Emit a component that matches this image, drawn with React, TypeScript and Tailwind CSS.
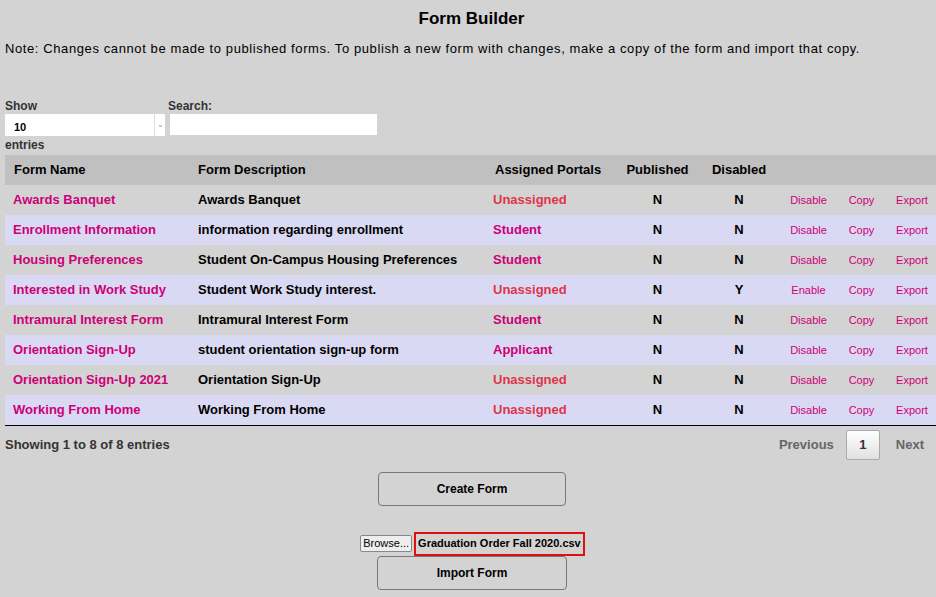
import React from 'react';

type Row = {
    name: string;
    desc: string;
    portal: string;
    published: string;
    disabled: string;
    toggle: string;
};

const rows: Row[] = [
    { name: 'Awards Banquet', desc: 'Awards Banquet', portal: 'Unassigned', published: 'N', disabled: 'N', toggle: 'Disable' },
    { name: 'Enrollment Information', desc: 'information regarding enrollment', portal: 'Student', published: 'N', disabled: 'N', toggle: 'Disable' },
    { name: 'Housing Preferences', desc: 'Student On-Campus Housing Preferences', portal: 'Student', published: 'N', disabled: 'N', toggle: 'Disable' },
    { name: 'Interested in Work Study', desc: 'Student Work Study interest.', portal: 'Unassigned', published: 'N', disabled: 'Y', toggle: 'Enable' },
    { name: 'Intramural Interest Form', desc: 'Intramural Interest Form', portal: 'Student', published: 'N', disabled: 'N', toggle: 'Disable' },
    { name: 'Orientation Sign-Up', desc: 'student orientation sign-up form', portal: 'Applicant', published: 'N', disabled: 'N', toggle: 'Disable' },
    { name: 'Orientation Sign-Up 2021', desc: 'Orientation Sign-Up', portal: 'Unassigned', published: 'N', disabled: 'N', toggle: 'Disable' },
    { name: 'Working From Home', desc: 'Working From Home', portal: 'Unassigned', published: 'N', disabled: 'N', toggle: 'Disable' },
];

export default function App() {
    return (
        <div className="min-h-[597px] w-[936px] bg-[#d3d3d3] font-['Liberation_Sans',Arial,sans-serif] text-black overflow-hidden">
            {/* Title */}
            <h1 className="pl-[7px] pt-[8px] text-center text-[17px] font-bold leading-[22px]">Form Builder</h1>
            <p className="pl-[5px] pt-[11px] text-[13px] leading-[16px] tracking-[0.6px]">
                Note: Changes cannot be made to published forms. To publish a new form with changes, make a copy of the form and import that copy.
            </p>

            {/* Controls */}
            <div className="mt-[42px] flex pl-[5px] text-[12px] font-bold text-[#333]">
                <div className="flex flex-col">
                    <span className="leading-[14px]">Show</span>
                    <div className="mt-[1px] flex h-[22px] w-[160px] bg-white">
                        <span className="flex-1 pl-[9px] pt-[5px] text-[11px] text-black">10</span>
                        <span className="flex w-[11px] items-center justify-center border-l border-[#ddd] text-[8px] font-normal text-[#999]">⌄</span>
                    </div>
                </div>
                <div className="ml-[3px] flex flex-col">
                    <span className="leading-[14px]">Search:</span>
                    <div className="ml-[2px] mt-[1px] h-[21px] w-[207px] bg-white" />
                </div>
            </div>
            <div className="pl-[5px] text-[12px] font-bold leading-[19px] text-[#333]">entries</div>

            {/* Table */}
            <table className="ml-[5px] w-[931px] table-fixed border-collapse text-[13px] font-bold">
                <colgroup>
                    <col className="w-[184px]" />
                    <col className="w-[297px]" />
                    <col className="w-[133px]" />
                    <col className="w-[77px]" />
                    <col className="w-[86px]" />
                    <col className="w-[53px]" />
                    <col className="w-[53px]" />
                    <col className="w-[48px]" />
                </colgroup>
                <thead>
                    <tr className="h-[30px] bg-[#c0c0c0]">
                        <th className="pl-[9px] text-left">Form Name</th>
                        <th className="pl-[9px] text-left">Form Description</th>
                        <th className="pl-[9px] text-left">Assigned Portals</th>
                        <th className="text-center">Published</th>
                        <th className="text-center">Disabled</th>
                        <th />
                        <th />
                        <th />
                    </tr>
                </thead>
                <tbody className="border-b border-black">
                    {rows.map((r, i) => (
                        <tr key={r.name} className={i % 2 === 0 ? 'h-[30px] bg-[#d3d3d3]' : 'h-[30px] bg-[#dad9f3]'}>
                            <td className="pl-[8px] text-[#cc0077]">{r.name}</td>
                            <td className="pl-[9px]">{r.desc}</td>
                            <td className={r.portal === 'Unassigned' ? 'pl-[7px] text-[#e0344c]' : 'pl-[7px] text-[#cc0077]'}>{r.portal}</td>
                            <td className="text-center">{r.published}</td>
                            <td className="text-center">{r.disabled}</td>
                            <td className="text-center text-[11px] font-normal text-[#cc0077]">{r.toggle}</td>
                            <td className="text-center text-[11px] font-normal text-[#cc0077]">Copy</td>
                            <td className="text-center text-[11px] font-normal text-[#cc0077]">Export</td>
                        </tr>
                    ))}
                </tbody>
            </table>

            {/* Footer of table */}
            <div className="flex items-center justify-between pl-[5px] pt-[4px] text-[13px] font-bold text-[#333]">
                <span>Showing 1 to 8 of 8 entries</span>
                <div className="flex items-center">
                    <span className="text-[#666]">Previous</span>
                    <span className="ml-[12px] flex h-[30px] w-[34px] items-center justify-center rounded-[2px] border border-[#aaa] bg-gradient-to-b from-white to-[#e0e0e0] text-[#333]">1</span>
                    <span className="ml-[16px] mr-[12px] text-[#666]">Next</span>
                </div>
            </div>

            {/* Actions */}
            <div className="flex flex-col items-center pl-[8px] font-['Liberation_Sans',Arial,sans-serif] text-[12px] font-bold">
                <button className="mt-[12px] h-[34px] w-[188px] rounded-[4px] border border-[#777] bg-[#d3d3d3]">Create Form</button>
                <div className="mt-[26px] flex h-[24px] items-center pl-[1px]">
                    <span className="flex h-[17px] items-center rounded-[2px] border border-[#888] bg-[#eee] px-[2px] text-[11px] leading-[15px] font-normal">Browse...</span>
                    <span className="ml-[2px] flex h-[24px] items-center border-2 border-[#e01010] px-[2px] text-[11px] leading-[15px]">Graduation Order Fall 2020.csv</span>
                </div>
                <button className="h-[34px] w-[190px] rounded-[4px] border border-[#777] bg-[#d3d3d3]">Import Form</button>
            </div>
        </div>
    );
}
